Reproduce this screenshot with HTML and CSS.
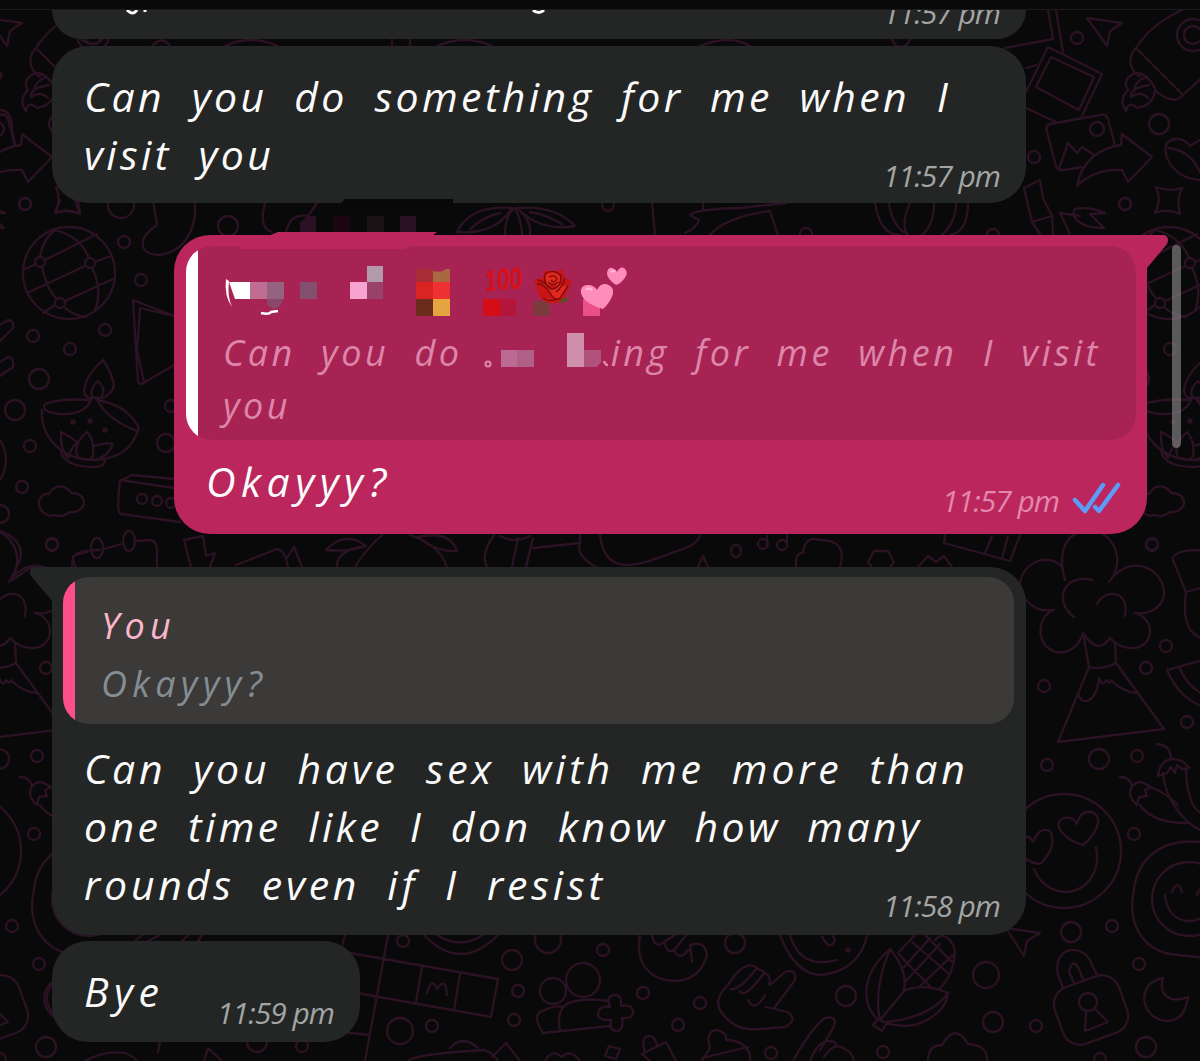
FILE: index.html
```html
<!DOCTYPE html>
<html lang="en">
<head>
    <meta charset="UTF-8">
    <meta name="viewport" content="width=device-width, initial-scale=1.0">
    <title>Chat</title>
    <link rel="stylesheet" href="styles.css">
</head>
<body>
    <div class="screen">
        <!-- doodle wallpaper, repeats every 1100px -->
        <svg class="wallpaper" width="1200" height="1061" viewBox="0 0 1200 1061">
            <defs>
                <g id="right">
                    <!-- photos, rocket, arrow -->
                    <path d="M1048 10L1053 39L1005 48M1056 10L1063 52M1048 47L1102 74L1082 116M1048 47L1026 92M1051 57L1094 77L1079 110L1036 87ZM1026 68L1036 65M1026 108L1056 122"/>
                    <path d="M1087 18L1122 23L1110 31L1107 46Z"/>
                    <path d="M1182 10Q1150 25 1136 48L1183 95L1205 75M1136 48C1125 60 1132 72 1140 77M1155 90C1165 100 1178 103 1183 95"/>
                    <circle cx="1193" cy="35" r="16"/><circle cx="1193" cy="35" r="9"/>
                    <path d="M1133 74Q1122 80 1128 90Q1118 100 1126 111Q1128 100 1137 108Q1155 105 1155 88Q1145 70 1133 74M1149 85Q1130 88 1131 97Q1140 90 1148 98M1145 78Q1136 80 1134 90"/>
                    <path d="M1115 146L1108 119Q1106 113 1100 115L1050 124Q1045 125 1047 132L1056 166Q1058 171 1064 170L1082 167M1059 169L1068 143L1077 153L1082 147L1094 155"/>
                    <circle cx="1097" cy="129" r="7"/>
                    <path d="M1077 186C1082 160 1100 148 1121 145L1122 134L1152 157L1128 182L1122 170Q1095 168 1077 186Z"/>
                    <path d="M1156 187Q1169 192 1182 188Q1176 200 1180 214Q1167 208 1155 213Q1162 200 1156 187Z"/>
                    <path d="M1200 180C1170 178 1160 150 1168 142Q1180 134 1190 146L1200 140M1168 148Q1190 150 1200 172"/>
                    <path d="M1024 188L1040 180L1043 198L1052 216L1053 234M1024 188L1032 222L1040 234M1032 222L1052 216M1070 234L1060 213L1080 216M1075 209Q1090 206 1105 213L1090 214L1104 228Q1080 228 1073 215Z"/>
                    <circle cx="1077" cy="38" r="6"/><circle cx="1159" cy="124" r="10"/><circle cx="1034" cy="157" r="6"/><circle cx="1125" cy="204" r="6"/>
                    <!-- volcano -->
                    <path d="M1065 580C1055 545 1072 530 1090 530C1115 532 1126 562 1109 582M1115 575C1135 555 1165 570 1164 595C1162 608 1148 615 1135 613C1155 618 1155 645 1135 648Q1120 649 1110 638Q1098 656 1083 633C1078 650 1062 658 1048 648C1035 636 1040 615 1054 610C1035 613 1020 600 1020 582C1025 560 1050 553 1062 567M1092 580C1065 573 1052 600 1074 617M1097 604C1105 588 1130 590 1125 616"/>
                    <path d="M1083 633L1089 667Q1103 670 1116 663L1115 643M1089 667L1058 742L1164 729L1116 663M1078 693C1080 706 1096 705 1099 678Q1103 688 1106 680Q1110 685 1111 680Q1122 692 1137 693"/>
                    <path d="M1200 550Q1172 550 1173 560L1186 592Q1182 620 1192 632L1200 638M1186 592L1200 588M1167 670L1210 658M1167 670Q1180 700 1205 707M1179 667Q1188 688 1205 695"/>
                    <!-- chillies -->
                    <path d="M1157 744Q1170 745 1171 758M1158 776C1160 755 1180 755 1189 768L1182 769L1177 765L1175 773L1171 767L1167 773ZM1163 773C1165 800 1185 825 1205 832M1186 770C1187 800 1195 812 1205 815"/>
                    <path d="M1120 777Q1130 777 1132 786M1137 805C1125 795 1130 782 1142 782L1151 787L1145 790L1147 796L1139 797ZM1140 805C1150 820 1170 823 1187 823M1150 787Q1165 792 1178 805"/>
                    <!-- faces -->
                    <circle cx="1064" cy="851" r="57"/>
                    <path d="M1083 845C1060 838 1052 822 1064 818Q1073 816 1077 824Q1080 810 1092 812C1105 818 1095 835 1083 845M1040 864C1015 860 1010 840 1022 837Q1030 835 1033 842Q1040 826 1050 831C1057 842 1048 857 1040 864M1034 869C1050 908 1105 895 1096 847"/>
                    <path d="M1200 842C1160 838 1137 860 1134 890C1127 920 1140 945 1165 953Q1180 956 1210 958M1165 895C1168 925 1195 925 1205 915M1172 892Q1178 878 1182 892M1197 895q5-14 10 0"/>
                    <circle cx="1189" cy="899" r="37"/>
                    <!-- cursor, padlock, moon -->
                    <path d="M1006 928L1040 933L1027 941L1024 956Z"/>
                    <path d="M1063 988L1058 975C1052 945 1085 942 1092 965L1097 975M1074 983L1069 972Q1072 958 1078 967L1083 979M1086 1011L1085 1031L1108 1022L1094 1008"/>
                    <rect x="1057" y="980" width="68" height="60" rx="18" transform="rotate(-20 1091 1010)"/>
                    <circle cx="1088" cy="1002" r="9"/>
                    <path d="M1163 978C1135 983 1140 1020 1168 1021Q1185 1020 1188 997C1170 1004 1158 995 1163 978"/>
                    <circle cx="1152" cy="544" r="6"/><circle cx="1166" cy="646" r="6"/><circle cx="1146" cy="668" r="6"/><circle cx="1044" cy="686" r="6"/><circle cx="1187" cy="722" r="6"/><circle cx="1099" cy="759" r="10"/><circle cx="1137" cy="756" r="6"/><circle cx="1047" cy="765" r="6"/><circle cx="1134" cy="834" r="6"/><circle cx="1071" cy="932" r="10"/><circle cx="1112" cy="926" r="6"/><circle cx="1139" cy="964" r="6"/><circle cx="1036" cy="1026" r="6"/><circle cx="1146" cy="1047" r="10"/><circle cx="1100" cy="1059" r="6"/>
                </g>
                <g id="left">
                    <!-- globe -->
                    <circle cx="69" cy="273" r="46"/>
                    <path d="M25 269L36 264M45 260L97 234M27 293L85 266M95 262L111 256M43 313L55 305M65 301L113 279M40 257Q42 240 55 230M42 267Q47 290 57 299M64 307Q72 315 86 317M55 230Q80 236 89 258M92 268Q103 290 95 311"/>
                    <circle cx="40" cy="262" r="5"/><circle cx="90" cy="263" r="5"/><circle cx="60" cy="303" r="5"/>
                    <!-- oil lamp -->
                    <path d="M103 360C80 380 80 400 93 398L103 398Q118 390 112 378Q110 370 103 360M98 381Q88 390 93 398M98 381Q106 388 102 396M91 400Q85 415 60 414Q40 412 45 404Q60 398 91 400M97 400Q110 422 138 431Q140 428 136 423Q125 405 97 400M42 410C40 435 60 460 95 460Q130 458 138 430M61 452Q65 467 95 467Q105 466 105 460M61 432Q60 450 68 458Q70 450 77 442Q70 436 61 432M87 432Q72 445 78 458Q90 462 93 456Q95 440 87 432M94 446Q105 442 113 444Q108 456 97 459"/>
                    <circle cx="73" cy="422" r="1.5"/><circle cx="90" cy="421" r="1.5"/><circle cx="105" cy="430" r="1.5"/>
                    <path d="M50 516Q38 512 39 501Q42 493 49 494Q55 484 64 487Q70 490 71 493Q84 493 84 504Q80 513 70 512Q62 518 55 515Z"/>
                    <circle cx="25" cy="204" r="6"/><circle cx="33" cy="336" r="6"/><circle cx="70" cy="349" r="6"/><circle cx="39" cy="379" r="10"/><circle cx="15" cy="410" r="10"/><circle cx="30" cy="446" r="6"/><circle cx="22" cy="487" r="6"/><circle cx="52" cy="545" r="6"/>
                </g>
            </defs>
            <use href="#right"/>
            <use href="#right" x="-1100"/>
            <use href="#left"/>
            <use href="#left" x="1100"/>
            <!-- left edge -->
            <path d="M60 200L55 213Q68 208 80 214L75 200M153 200L157 225C135 240 140 255 160 255Q190 250 195 215L195 203M174 316L133 300L138 382Q140 386 145 382L174 365M174 316L140 308L137 350L144 382M174 488L120 480Q116 515 121 514L180 522M122 480L132 475L174 479M72 567L73 556L87 552M104 549L121 544M137 541L150 540Q157 541 157 550V567"/>
            <path d="M0 325L8 320Q14 320 13 328L0 341M0 362L8 357Q14 357 13 367L0 376M0 440Q12 460 0 480M0 531Q25 540 20 560L10 581L32 567M0 110Q12 110 12 130L15 146"/>
            <ellipse cx="97" cy="548" rx="6" ry="10"/><ellipse cx="129" cy="541" rx="6" ry="10"/>
            <circle cx="124" cy="242" r="6"/><circle cx="141" cy="280" r="6"/><circle cx="105" cy="330" r="6"/><circle cx="166" cy="443" r="9"/><circle cx="171" cy="406" r="6"/><circle cx="0" cy="514" r="9"/><circle cx="121" cy="205" r="13"/><circle cx="142" cy="499" r="5"/><circle cx="157" cy="501" r="5"/><circle cx="171" cy="503" r="5"/>
            <!-- between the bubbles -->
            <path d="M80 39Q95 49 102 39M152 46Q162 35 170 46M225 46Q250 34 278 46M392 39V46M410 46V39M437 46Q465 34 492 46M700 46Q730 34 750 46M892 39Q895 47 900 47Q908 47 910 39"/>
            <circle cx="228" cy="226" r="10"/>
            <path d="M265 203Q258 228 272 232M286 232Q290 213 308 216L317 203M457 232Q470 205 512 208Q495 235 457 232M470 229Q485 216 500 213M575 226Q555 205 517 208Q540 232 575 226M562 224Q545 214 530 212M505 235Q505 215 515 208Q522 222 522 235M530 235Q532 220 517 208M652 203L655 235M703 203V209M690 215Q696 209 740 208L786 203M690 215L699 220Q697 228 685 233M710 235Q725 217 770 211L778 235M875 203Q880 235 900 235M968 203Q968 232 950 235M889 203Q892 225 905 233M910 203Q900 225 908 235M934 203Q934 225 922 235M956 203Q956 222 942 235"/>
            <circle cx="608" cy="205" r="6"/><circle cx="806" cy="234" r="6"/><circle cx="993" cy="235" r="6"/>
            <path d="M191 567L184 540L203 536L206 556L215 553L210 567M236 565L277 549Q285 550 288 567M287 558L294 547L302 567M326 550Q345 530 366 546Q350 552 326 550M366 546Q336 550 337 567M382 535Q365 550 355 567M410 535Q440 545 447 567M418 537Q450 530 457 551Q435 552 418 537M494 535Q480 555 487 567M518 538L512 567M533 538L526 567M533 548L580 543V535M580 543Q575 555 596 567M500 536Q515 544 530 536M600 535C605 580 640 565 680 550Q697 545 700 535M698 567L703 556L708 567M767 546V536M787 546V533M796 567Q795 552 803 553Q805 535 820 540Q848 540 840 567M872 567L868 562L874 551H888L894 562L890 567M918 567L928 556L936 562L944 556L952 567M945 535L944 543L1010 561L1020 535M992 536L985 553M1008 536L1002 558"/>
            <ellipse cx="736" cy="551" rx="5" ry="6"/><circle cx="763" cy="544" r="5"/><circle cx="782" cy="545" r="5"/>
            <!-- bottom strip -->
            <path d="M135 941L142 935M148 941L160 935M182 941L188 935M198 941L202 935M345 935L340 955M388 935L365 1061M350 953L498 979L491 1017L340 990M422 967L416 1002M460 974L454 1010M340 1032L370 1035M427 993Q432 976 437 989Q446 976 447 995M424 935Q460 973 498 935M437 935Q460 950 483 935"/>
            <circle cx="400" cy="1031" r="13"/><circle cx="432" cy="1026" r="6"/><circle cx="403" cy="941" r="6"/><circle cx="512" cy="960" r="10"/><circle cx="518" cy="991" r="6"/><circle cx="514" cy="1020" r="6"/><circle cx="548" cy="940" r="13"/><circle cx="603" cy="950" r="6"/><circle cx="643" cy="993" r="6"/><circle cx="700" cy="1003" r="6"/><circle cx="678" cy="1025" r="6"/><circle cx="735" cy="943" r="10"/><circle cx="771" cy="1053" r="6"/>
            <circle cx="553" cy="991" r="13"/><circle cx="583" cy="980" r="17"/>
            <path d="M610 1026L543 1033Q530 1013 545 1010Q555 1005 562 1007M560 1030Q555 1005 575 1001Q590 998 608 1001M609 1003Q607 995 615 995Q622 995 621 1006Q633 1004 633 1012Q633 1019 622 1018Q624 1031 616 1031Q609 1030 611 1020Q598 1021 598 1013Q600 1005 610 1007Z"/>
            <path d="M640 935C635 965 650 980 675 981Q700 980 707 955Q705 940 690 945L692 962M652 935Q655 950 664 942L675 935M664 942Q668 955 674 950L686 935M674 950Q680 962 688 950"/>
            <path d="M728 985Q712 1000 722 1013Q735 1032 760 1029L785 1027Q798 1020 788 1012L766 1007M775 1007L795 980Q797 968 785 972L770 985M728 985Q745 958 757 968M731 989Q740 990 756 969Q765 970 765 974M740 991Q744 1000 764 973Q772 976 769 984M748 1000Q755 1013 765 995"/>
            <path d="M408 1061Q415 1054 485 1050Q495 1055 498 1061M450 1048Q463 1034 478 1048M492 1057L506 1043L520 1061M545 1061Q552 1048 562 1057Q570 1048 580 1061M605 1056L609 1046L620 1049L616 1059ZM650 1061L642 1054L666 1042L676 1061M645 1052Q640 1036 650 1036Q656 1038 657 1046M702 1061L710 1048Q705 1030 718 1030Q728 1034 726 1040Q745 1040 750 1055V1061M702 1058L748 1047"/>
            <path d="M780 935Q795 975 822 975Q860 970 867 935M790 935Q800 970 837 960M822 937L827 944Q833 947 835 940L832 935M793 1061Q810 1030 825 1018Q840 1015 832 1030L820 1050M810 1061Q818 1040 830 1041Q838 1042 835 1046M824 1057Q835 1040 846 1050Q852 1052 854 1061"/>
            <circle cx="848" cy="950" r="1.5"/>
            <!-- corn -->
            <path d="M890 949Q860 975 868 1005Q875 1020 880 1020Q895 1028 915 1025Q945 1015 948 993Q925 983 905 990L880 1020M890 949Q908 970 904 990M890 949Q873 990 880 1020M948 993Q930 1018 885 1022M877 1020L873 1025L882 1031L887 1023M898 953L915 935M955 950Q950 935 940 936L935 940M955 950Q954 975 940 988M898 953L906 962L930 986M912 942L948 973M925 935L952 962M905 982L940 944M904 967L930 938M920 986L953 955"/>
            <circle cx="986" cy="975" r="13"/><circle cx="846" cy="996" r="10"/><circle cx="993" cy="1022" r="10"/><circle cx="883" cy="1052" r="6"/><circle cx="257" cy="1042" r="10"/><circle cx="302" cy="1046" r="6"/>
            <path d="M928 1061Q928 1045 942 1045Q955 1022 968 1044Q988 1045 987 1061M85 1061Q105 1050 125 1053Q135 1057 137 1061M160 1042L158 1052M204 1061L208 1048L222 1061M52 985Q42 997 52 1012"/>
        </svg>

        <div class="topbar"></div>

        <div class="chat">
            <div class="bubble in cut">
                <svg class="tails" width="470" height="5" viewBox="0 0 470 5"><path d="M2 0Q8 6 12 0M20 0V2M408 0Q414 5 419 0"/></svg>
                <span class="time">11:57 pm</span>
            </div>

            <div class="bubble in first">
                <div class="line l1">Can you do something for me when I</div>
                <div class="row">
                    <div class="line l2">visit you</div>
                    <span class="time">11:57 pm</span>
                </div>
            </div>

            <div class="bubble out">
                <svg class="tail tail-right" width="23" height="36" viewBox="0 0 23 36"><path d="M0 0H18Q24 2 21 9L1 33V36H0Z"/></svg>
                <div class="quote">
                    <!-- pixelated contact name and emoji -->
                    <svg class="name" width="420" height="54" viewBox="222 264 420 54">
                        <path d="M226 279Q224 296 232 307Q227 296 229 281Z" fill="#fff"/>
                        <path d="M229 282h21v17h-15z" fill="#fff"/>
                        <path d="M250 282h17v17h-17z" fill="#c06c93"/>
                        <path d="M267 282h17v17h-17z" fill="#94637f"/>
                        <path d="M267 299h16q-2 9-10 10l-6-4z" fill="#87486a"/>
                        <path d="M261 313q8 2 10-1l7-1" stroke="#fff" stroke-width="2.5" fill="none"/>
                        <path d="M300 282h17v17h-17z" fill="#834f6e"/>
                        <path d="M350 282h17v17h-17z" fill="#f7a3cf"/>
                        <path d="M367 266h16v16h-16z" fill="#b39aa8"/>
                        <path d="M367 282h16v17h-16z" fill="#98426a"/>
                        <path d="M416 269h17v13h-17z" fill="#a82c35"/>
                        <path d="M433 271q10 2 12-2h5v13h-17z" fill="#a9683f"/>
                        <path d="M416 282h17v17h-17z" fill="#da2323"/>
                        <path d="M433 282h17v17h-17z" fill="#ee3133"/>
                        <path d="M416 299h17v17h-17z" fill="#6b2c1b"/>
                        <path d="M433 299h17v17h-17z" fill="#e6a440"/>
                        <text class="hundred" x="485" y="291" textLength="38" lengthAdjust="spacingAndGlyphs" transform="rotate(-4 485 291)">100</text>
                        <path d="M483 299h17v17h-17z" fill="#d50d16"/>
                        <path d="M500 299h16v17h-16z" fill="#b3163a"/>
                        <path d="M533 301h17v15h-17z" fill="#7b3b3c"/>
                        <path d="M554 300l14-3 0 4-7 2z" fill="#5f4d22"/>
                        <path d="M534 280l9-2 1-7 9 0 9-1 3 8 6 3-3 9-3 7-8 6h-10l-8-7z" fill="#c81414"/>
                        <path d="M545 274q9-6 16 2q0 12-9 13q-9-3-7-15zM537 284q8 0 13 9t10 5q5-8 8-12M543 298q6 4 14 1" fill="#e02a20" stroke="#7c0b0b" stroke-width="1.4"/>
                        <path d="M549 277q6-3 8 2q-3 5-6 1M548 282q5 5 10 0M565 278q-2 9-9 14M537 280q4 0 8 4" fill="none" stroke="#7c0b0b" stroke-width="1.3"/>
                        <path d="M583 299h17v17h-17z" fill="#ea4f86"/>
                        <path d="M603 309Q583 303 581 293Q580 285 588 285Q594 285 597 290Q600 283 606 284Q614 286 613 294Q610 303 603 309Z" fill="#ff8dbb"/>
                        <path d="M616 285Q607 279 607 273Q608 267 612 268Q616 269 617 272Q620 266 624 268Q628 271 626 276Q622 283 616 285Z" fill="#ff8dbb"/>
                        <path d="M586 290q3-3 6 0M611 272q2-2 4 0" fill="none" stroke="#ffc0da" stroke-width="2"/>
                    </svg>
                    <div class="quote-text">
                        <div class="line q1"><span>Can you do</span><svg class="mosaic" width="126" height="36" viewBox="482 331 126 36">
                            <circle cx="487" cy="363" r="2.5" fill="none" stroke="#dc86aa" stroke-width="2"/>
                            <path d="M500 349h16v17h-16z" fill="#bb6b93"/>
                            <path d="M516 349h17v17h-17z" fill="#b06086"/>
                            <path d="M566 332h17v34h-17z" fill="#d08faa"/>
                            <path d="M583 349h17v12l-4 5h-13z" fill="#b0527b"/>
                            <path d="M603 360q1 4 4 4" fill="none" stroke="#dc86aa" stroke-width="2.5"/>
                        </svg><span>ing for me when I visit</span></div>
                        <div class="line q2">you</div>
                    </div>
                </div>
                <div class="row">
                    <div class="line l3">Okayyy?</div>
                    <span class="time">11:57 pm
                        <svg class="ticks" width="50" height="34" viewBox="0 0 50 34"><path d="M3 19L13 30L31 4M23 26L27 30L46 4"/></svg>
                    </span>
                </div>
            </div>

            <div class="bubble in reply">
                <svg class="tail tail-left" width="23" height="36" viewBox="0 0 23 36"><path d="M23 0H4Q-2 2 1 9L22 34V36H23Z"/></svg>
                <div class="quote">
                    <div class="line you">You</div>
                    <div class="line ok">Okayyy?</div>
                </div>
                <div class="line l4">Can you have sex with me more than</div>
                <div class="line l5">one time like I don know how many</div>
                <div class="row">
                    <div class="line l6">rounds even if I resist</div>
                    <span class="time">11:58 pm</span>
                </div>
            </div>

            <div class="bubble in bye">
                <div class="row">
                    <div class="line l7">Bye</div>
                    <span class="time">11:59 pm</span>
                </div>
            </div>
        </div>

        <!-- smudges left over the edges of the bubbles -->
        <svg class="smudge" width="220" height="52" viewBox="235 199 220 52">
            <path d="M340 204l5-5h108v7h-113z" fill="#090808"/>
            <path d="M300 232v-10l8-6h8v16zM400 216h16v16h-16z" fill="#2b1124"/>
            <path d="M333 216h17v16h-17z" fill="#1a0610"/>
            <path d="M367 216h17v16h-17z" fill="#1b1216"/>
            <path d="M268 236l10-4h159l-5 4z" fill="#bb265d"/>
            <path d="M240 245h170l-6 4h-164z" fill="#bb265d"/>
        </svg>
        <div class="scrollbar"></div>
    </div>
</body>
</html>
```
FILE: styles.css
```css
body {
    margin: 0;
    background-color: #0a0909;
    font-family: "Open Sans", "Noto Sans", sans-serif;
    font-style: italic;
}
.screen {
    position: relative;
    width: 1200px;
    height: 1061px;
    overflow: hidden;
}
.wallpaper {
    position: absolute;
    top: 0;
    left: 0;
    fill: none;
    stroke: #2c1225;
    stroke-width: 2.3;
    stroke-linejoin: round;
    stroke-linecap: round;
}
.topbar {
    position: relative;
    height: 9px;
    background-color: #0a0909;
    border-bottom: 1px solid #1b1b1b;
}
.chat {
    position: relative;
    display: flex;
    flex-direction: column;
    align-items: flex-start;
    height: 1051px;
    overflow: hidden;
}
.bubble {
    position: relative;
    box-sizing: border-box;
    width: 974px;
    margin-left: 52px;
    padding: 0 26px 0 32px;
    border-radius: 36px;
    background-color: #242625;
    color: #fafafa;
}
.line {
    font-size: 41px;
    line-height: 58px;
    white-space: nowrap;
}
.row {
    display: flex;
    justify-content: space-between;
}
.time {
    display: flex;
    font-size: 30px;
    line-height: 40px;
    letter-spacing: -1px;
    color: #a3a5a4;
    white-space: nowrap;
}
.cut {
    display: flex;
    justify-content: space-between;
    height: 29px;
    border-radius: 0 0 36px 36px;
}
.cut .time {
    margin-top: -17px;
}
.tails {
    margin-left: 41px;
    fill: none;
    stroke: #fafafa;
    stroke-width: 3;
}
.first {
    height: 157px;
    margin-top: 7px;
    padding-top: 21px;
}
.first .time {
    margin-top: 31px;
}
.out {
    width: 973px;
    height: 299px;
    margin-top: 32px;
    margin-left: 174px;
    padding: 11px 11px 0 12px;
    border-top-right-radius: 0;
    background-color: #bb265d;
}
.tail {
    position: absolute;
    top: 0;
}
.tail-right {
    left: 972px;
    fill: #bb265d;
}
.tail-left {
    left: -22px;
    fill: #242625;
}
.quote {
    box-sizing: border-box;
    border-radius: 26px;
    overflow: hidden;
}
.out .quote {
    height: 194px;
    padding: 18px 0 0 36px;
    background: linear-gradient(90deg, #fff 12px, #a72353 12px);
}
.name {
    display: block;
    overflow: visible;
}
.hundred {
    font-family: Lato, sans-serif;
    font-size: 29px;
    font-weight: 900;
    fill: #d90f16;
}
.quote-text {
    padding: 8px 0 0 1px;
    color: #dc86aa;
}
.quote-text .line {
    font-size: 36px;
    line-height: 53px;
}
.q1 {
    display: flex;
}
.mosaic {
    margin: 6px 2px 0 20px;
}
.out .row {
    padding: 12px 14px 0 20px;
}
.out .time {
    margin-top: 29px;
    color: #e288ab;
}
.ticks {
    margin: 0 0 0 13px;
    fill: none;
    stroke: #5b9cf8;
    stroke-width: 4.5;
    stroke-linecap: round;
    stroke-linejoin: round;
}
.reply {
    height: 368px;
    margin-top: 33px;
    padding-top: 10px;
    border-top-left-radius: 0;
}
.reply .quote {
    width: 951px;
    height: 147px;
    margin: 0 0 15px -21px;
    padding: 20px 0 0 38px;
    background: linear-gradient(90deg, #ff4f8b 12px, #3b3a38 12px);
}
.reply .quote .line {
    font-size: 36px;
    letter-spacing: 5.3px;
}
.you {
    color: #fbb6cb;
}
.ok {
    color: #838d93;
}
.reply .time {
    margin-top: 31px;
}
.bye {
    width: 308px;
    height: 101px;
    margin-top: 6px;
    padding-top: 21px;
}
.bye .time {
    margin-top: 31px;
}
.l1, .l2, .l4, .l5, .l6 {
    letter-spacing: 3.4px;
    word-spacing: 12.6px;
}
.l4, .l6 {
    letter-spacing: 3.8px;
}
.l3, .l7 {
    letter-spacing: 5.5px;
}
.q1, .q2 {
    letter-spacing: 3.5px;
    word-spacing: 12.5px;
}
.smudge {
    position: absolute;
    top: 199px;
    left: 235px;
}
.scrollbar {
    position: absolute;
    top: 245px;
    right: 19px;
    width: 9px;
    height: 203px;
    border-radius: 5px;
    background-color: rgba(140, 140, 140, 0.62);
}
```
